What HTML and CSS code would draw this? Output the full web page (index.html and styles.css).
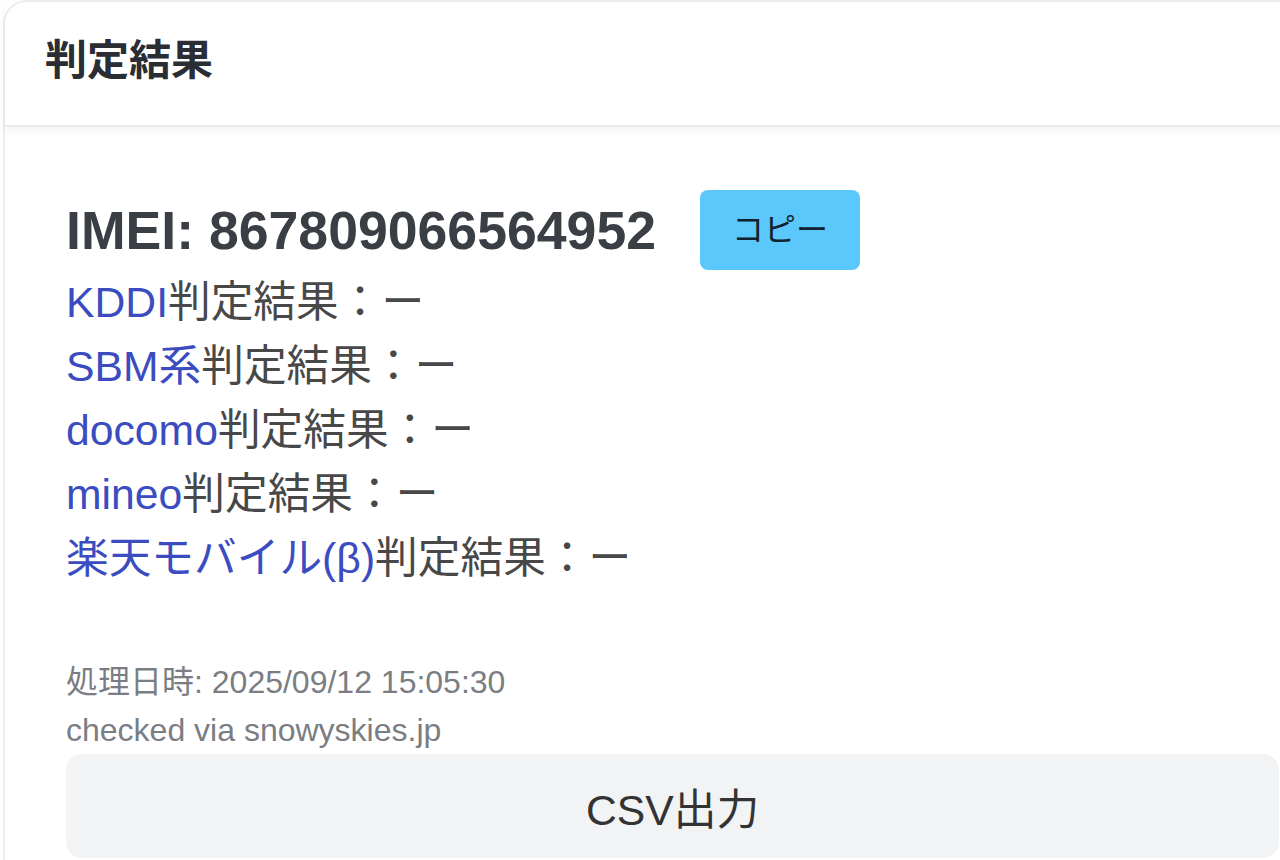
FILE: index.html
```html
<!DOCTYPE html>
<html lang="ja">
<head>
    <meta charset="UTF-8">
    <meta name="viewport" content="width=device-width, initial-scale=1.0">
    <title>判定結果</title>
    <link rel="stylesheet" href="styles.css">
</head>
<body>
    <div class="card">
        <div class="card-header">
            <h2>判定結果</h2>
        </div>

        <div class="card-body">
            <div class="imei-row">
                <span class="imei">IMEI: 867809066564952</span>
                <button class="copy-btn" type="button">コピー</button>
            </div>

            <ul class="results">
                <li><a href="#">KDDI</a>判定結果：ー</li>
                <li><a href="#">SBM系</a>判定結果：ー</li>
                <li><a href="#">docomo</a>判定結果：ー</li>
                <li><a href="#">mineo</a>判定結果：ー</li>
                <li><a href="#">楽天モバイル(β)</a>判定結果：ー</li>
            </ul>

            <div class="meta">
                <div>処理日時: 2025/09/12 15:05:30</div>
                <div>checked via snowyskies.jp</div>
            </div>

            <button class="csv-btn" type="button">CSV出力</button>
        </div>
    </div>
</body>
</html>
```

FILE: styles.css
```css
body {
    margin: 0;
    background-color: #fff;
    font-family: "Liberation Sans", Arial, "Noto Sans CJK JP", sans-serif;
    color: #484848;
    overflow: hidden;
}

.card {
    width: 1400px;
    margin-left: 3px;
    border: 2px solid #ededed;
    border-radius: 24px;
    background-color: #fff;
}

.card-header {
    padding: 27px 40px 32px;
    border-bottom: 2px solid #ececec;
    box-shadow: 0 4px 8px rgba(0, 0, 0, 0.05);
}

.card-header h2 {
    margin: 0;
    font-size: 42px;
    line-height: 64px;
    font-weight: bold;
    color: #2a2d33;
}

.card-body {
    padding: 63px 61px 64px;
}

.imei-row {
    display: flex;
    align-items: center;
    gap: 44px;
}

.imei {
    font-size: 53.6px;
    font-weight: bold;
    color: #3a3e45;
}

.copy-btn {
    font-family: inherit;
    font-size: 32px;
    line-height: 48px;
    padding: 16px 32px;
    border: none;
    border-radius: 8px;
    background-color: #5ac8fa;
    color: #13202d;
    cursor: pointer;
}

.results {
    list-style: none;
    margin: 0;
    padding: 0;
    font-size: 42.7px;
    line-height: 64px;
}

.results a {
    color: #3b4cc0;
    text-decoration: none;
}

.meta {
    margin-top: 68px;
    font-size: 32px;
    line-height: 48px;
    color: #7a7e84;
}

.csv-btn {
    display: block;
    width: 1213px;
    height: 104px;
    font-family: inherit;
    font-size: 42.7px;
    border: none;
    border-radius: 16px;
    background-color: #f2f3f5;
    color: #333;
    cursor: pointer;
}
```
